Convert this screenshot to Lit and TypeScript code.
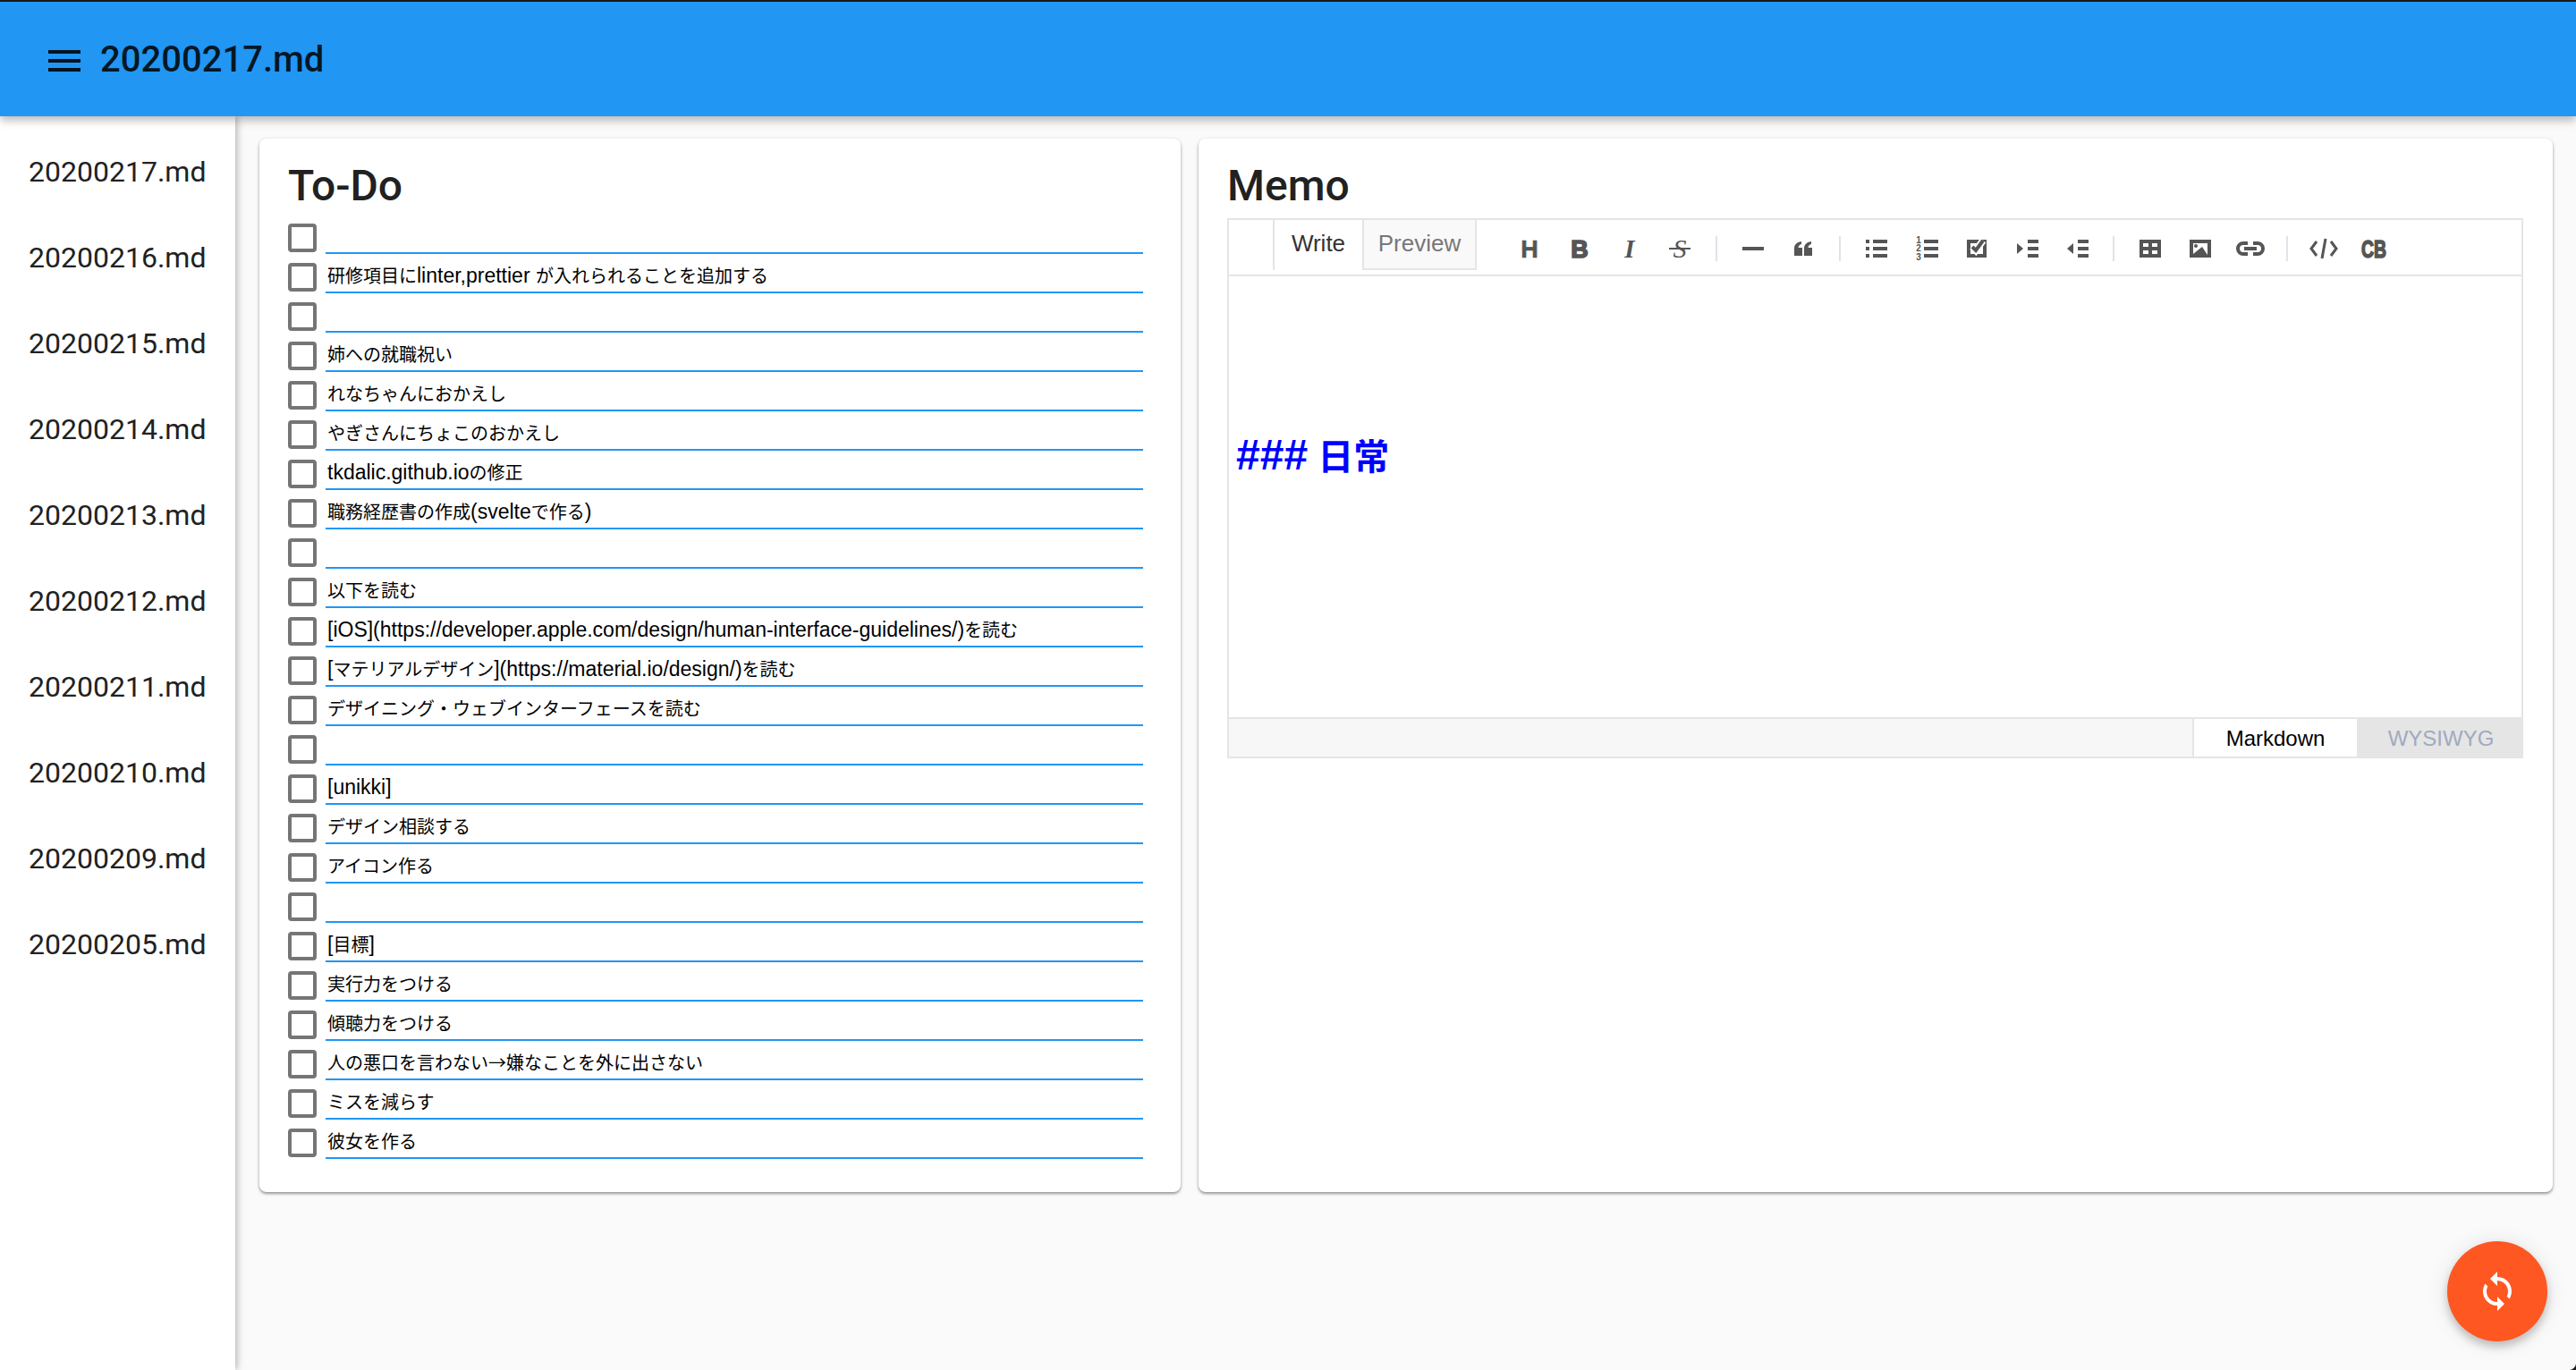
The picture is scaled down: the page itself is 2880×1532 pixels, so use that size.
import { LitElement, css, html, svg } from "lit";
import { customElement } from "lit/decorators.js";

const FILES = [
	"20200217.md", "20200216.md", "20200215.md", "20200214.md", "20200213.md",
	"20200212.md", "20200211.md", "20200210.md", "20200209.md", "20200205.md",
];

const TODOS = [
	"",
	"研修項目にlinter,prettier が入れられることを追加する",
	"",
	"姉への就職祝い",
	"れなちゃんにおかえし",
	"やぎさんにちょこのおかえし",
	"tkdalic.github.ioの修正",
	"職務経歴書の作成(svelteで作る)",
	"",
	"以下を読む",
	"[iOS](https://developer.apple.com/design/human-interface-guidelines/)を読む",
	"[マテリアルデザイン](https://material.io/design/)を読む",
	"デザイニング・ウェブインターフェースを読む",
	"",
	"[unikki]",
	"デザイン相談する",
	"アイコン作る",
	"",
	"[目標]",
	"実行力をつける",
	"傾聴力をつける",
	"人の悪口を言わない→嫌なことを外に出さない",
	"ミスを減らす",
	"彼女を作る",
];

const bars = (x: number, w: number) => svg`
	<rect x=${x} y="6" width=${w} height="4"/>
	<rect x=${x} y="14" width=${w} height="4"/>
	<rect x=${x} y="22" width=${w} height="4"/>`;

const QUOTE = "M6 24v-8c0-4 2-7 8-8v3c-2 .5-3.500 2-3.500 4H15v9z";

// toolbar icons, drawn in a 32x32 box, groups are split by a separator
const ICON_GROUPS = [
	[
		svg`<text x="16" y="26" class="glyph heavy" font-size="27" text-anchor="middle">H</text>`,
		svg`<text x="16" y="26" class="glyph black" font-size="27" text-anchor="middle">B</text>`,
		svg`<text x="16" y="26" class="serif bold" font-size="29" text-anchor="middle">I</text>`,
		svg`<text x="16" y="26" class="serif" font-size="30" text-anchor="middle">S</text><rect x="4" y="15" width="24" height="2"/>`,
	],
	[
		svg`<rect x="4" y="14" width="24" height="4"/>`,
		svg`<path d=${QUOTE}/><path d=${QUOTE} transform="translate(11 0)"/>`,
	],
	[
		svg`<rect x="4" y="6" width="4" height="4"/><rect x="4" y="14" width="4" height="4"/><rect x="4" y="22" width="4" height="4"/>${bars(12, 16)}`,
		svg`<text x="7" y="10" class="digit" font-size="10" text-anchor="middle">1</text><text x="7" y="19" class="digit" font-size="10" text-anchor="middle">2</text><text x="7" y="29" class="digit" font-size="10" text-anchor="middle">3</text>${bars(13, 16)}`,
		svg`<rect x="7" y="8" width="18" height="16" fill="none" stroke="#555" stroke-width="4"/><path d="M11 14l4 4 8-11" fill="none" stroke="#fff" stroke-width="8"/><path d="M11 14l4 4 8-11" fill="none" stroke="#555" stroke-width="4"/>`,
		svg`<path d="M5 10l7 6-7 6z"/>${bars(17, 12)}`,
		svg`<path d="M12 10l-7 6 7 6z"/>${bars(17, 12)}`,
	],
	[
		svg`<path fill-rule="evenodd" d="M4 6h24v20H4zM8 10v4h6v-4zM18 10v4h6v-4zM8 18v4h6v-4zM18 18v4h6v-4z"/>`,
		svg`<rect x="4" y="6" width="24" height="20"/><path d="M8 10h16v13l-6-9-10 8z" fill="#fff"/><circle cx="11" cy="13" r="2"/>`,
		svg`<path d="M13 8H8a8 8 0 0 0 0 16h5v-4H8a4 4 0 0 1 0-8h5zM19 8h5a8 8 0 0 1 0 16h-5v-4h5a4 4 0 0 0 0-8h-5z"/><rect x="9" y="14" width="14" height="4"/>`,
	],
	[
		svg`<path d="M8 8L2 16l6 8M24 8l6 8-6 8M18 5l-4 22" fill="none" stroke="#555" stroke-width="3"/>`,
		svg`<text x="16" y="26" class="glyph black" font-size="27" text-anchor="middle" textLength="28" lengthAdjust="spacingAndGlyphs">CB</text>`,
	],
];

// latin runs are set larger than the kana and kanji around them
const splitRuns = (text: string) =>
	text.split(/([\x20-\x7e]+)/).map((run, i) => (i % 2 ? html`<span class="lat">${run}</span>` : run));

@customElement("app-root")
export class AppRoot extends LitElement {
	static styles = css`
		:host {
			display: block;
			position: relative;
			width: 2880px;
			height: 1532px;
			overflow: hidden;
			background: #fafafa;
			font-family: Roboto, "Noto Sans CJK JP", sans-serif;
			color: #212121;
		}

		.app-bar {
			position: relative;
			z-index: 2;
			box-sizing: border-box;
			height: 130px;
			display: flex;
			align-items: center;
			gap: 22px;
			padding: 4px 0 0 54px;
			background: #2196f3;
			border-top: 2px solid #16181c;
			box-shadow: 0 4px 10px rgba(0, 0, 0, 0.3);
			color: rgba(0, 0, 0, 0.87);
			font-size: 40px;
			font-weight: 500;
		}

		.app-bar span {
			margin-bottom: 4px;
		}

		.burger {
			display: block;
			width: 36px;
			height: 24px;
			flex: none;
		}

		.content {
			display: flex;
			height: 1402px;
		}

		.side {
			position: relative;
			z-index: 1;
			flex: none;
			box-sizing: border-box;
			width: 263px;
			padding: 14px 0 0 32px;
			background: #fff;
			box-shadow: 2px 0 8px rgba(0, 0, 0, 0.28);
			font-size: 32px;
		}

		.side div {
			height: 96px;
			line-height: 96px;
		}

		.main {
			flex: 1;
			display: grid;
			grid-template-columns: 1030fr 1514fr;
			align-items: start;
			gap: 20px;
			padding: 25px 26px 0 27px;
		}

		.card {
			box-sizing: border-box;
			height: 1178px;
			padding: 20px 32px 0;
			background: #fff;
			border-radius: 8px;
			box-shadow: 0 2px 3px rgba(0, 0, 0, 0.35), 0 1px 5px rgba(0, 0, 0, 0.1);
		}

		h2 {
			margin: 0;
			height: 65px;
			font-size: 48px;
			line-height: 66px;
			font-weight: 500;
		}

		.row {
			display: flex;
			gap: 10px;
			padding-right: 10px;
		}

		.check {
			box-sizing: border-box;
			flex: none;
			width: 32px;
			height: 32px;
			margin-top: 10px;
			border: 4px solid #757575;
			border-radius: 4px;
		}

		.field {
			box-sizing: border-box;
			flex: 1;
			height: 44px;
			padding: 7px 0 0 2px;
			border-bottom: 2px solid #2196f3;
			font-family: "Noto Sans CJK JP", sans-serif;
			font-size: 20px;
			line-height: 34px;
			color: #000;
			white-space: nowrap;
		}

		.lat {
			font-family: "Liberation Sans", sans-serif;
			font-size: 23px;
		}

		.editor {
			box-sizing: border-box;
			margin: 4px 1px 0 0;
			height: 604px;
			display: flex;
			flex-direction: column;
			border: 2px solid #e5e5e5;
			font-family: "Liberation Sans", "Noto Sans CJK JP", sans-serif;
		}

		.toolbar {
			flex: none;
			box-sizing: border-box;
			height: 63px;
			display: flex;
			align-items: flex-start;
			padding-left: 49px;
			border-bottom: 2px solid #e5e5e5;
		}

		.tab {
			box-sizing: border-box;
			height: 56px;
			line-height: 52px;
			font-size: 26px;
			text-align: center;
		}

		.tab.write {
			width: 100px;
			border-left: 2px solid #e5e5e5;
			color: #333;
		}

		.tab.preview {
			width: 128px;
			background: #f9f9f9;
			border: 2px solid #e5e5e5;
			border-top: 0;
			color: #777;
		}

		.icons {
			display: flex;
			align-items: center;
			gap: 24px;
			margin: 16px 0 0 43px;
		}

		.icons svg {
			display: block;
			width: 32px;
			height: 32px;
			fill: #555;
			overflow: visible;
		}

		.sep {
			width: 2px;
			height: 28px;
			background: #e1e3e9;
		}

		.glyph {
			font-family: "Liberation Sans", sans-serif;
			font-weight: 700;
		}

		.heavy {
			stroke: #555;
			stroke-width: 0.6;
		}

		.black {
			stroke: #555;
			stroke-width: 1.6;
		}

		.serif {
			font-family: "Liberation Serif", serif;
			font-style: italic;
		}

		.bold {
			font-weight: 700;
		}

		.digit {
			font-family: "Liberation Sans", sans-serif;
			font-weight: 700;
		}

		.body {
			flex: 1;
			padding: 172px 0 0 8px;
			font-size: 40px;
			line-height: 56px;
			font-weight: 700;
			color: #0000ff;
		}

		.hashes {
			font-size: 48px;
		}

		.modes {
			flex: none;
			box-sizing: border-box;
			height: 44px;
			display: flex;
			justify-content: flex-end;
			background: #f7f7f7;
			border-top: 2px solid #e5e5e5;
			font-size: 24px;
		}

		.mode {
			box-sizing: border-box;
			line-height: 44px;
			text-align: center;
		}

		.mode.md {
			width: 184px;
			background: #fff;
			border-left: 2px solid #e5e5e5;
			color: #000;
		}

		.mode.wy {
			width: 184px;
			padding-left: 4px;
			background: #e5e5e5;
			color: #a0aabf;
		}

		.fab {
			position: absolute;
			right: 32px;
			bottom: 32px;
			width: 112px;
			height: 112px;
			display: flex;
			align-items: center;
			justify-content: center;
			border-radius: 50%;
			background: #ff5722;
			box-shadow: 0 6px 10px rgba(0, 0, 0, 0.2), 0 2px 24px rgba(0, 0, 0, 0.1);
		}

		.fab svg {
			width: 48px;
			height: 48px;
			fill: #fff;
		}

		.corner {
			position: absolute;
			right: 0;
			bottom: 0;
			width: 8px;
			height: 8px;
			background: radial-gradient(circle at top left, transparent 7.500px, #1c1a1e 8.500px);
		}
	`;

	renderIcons() {
		return ICON_GROUPS.map((group, i) => html`
			${i > 0 ? html`<span class="sep"></span>` : ""}
			${group.map((icon) => html`<svg viewBox="0 0 32 32">${icon}</svg>`)}
		`);
	}

	render() {
		return html`
			<header class="app-bar">
				<svg class="burger" viewBox="0 0 36 24" fill="currentColor">
					<rect width="36" height="4"/>
					<rect y="10" width="36" height="4"/>
					<rect y="20" width="36" height="4"/>
				</svg>
				<span>20200217.md</span>
			</header>
			<div class="content">
				<nav class="side">
					${FILES.map((name) => html`<div>${name}</div>`)}
				</nav>
				<main class="main">
					<section class="card">
						<h2>To-Do</h2>
						${TODOS.map((todo) => html`
							<div class="row">
								<span class="check"></span>
								<div class="field">${splitRuns(todo)}</div>
							</div>
						`)}
					</section>
					<section class="card">
						<h2>Memo</h2>
						<div class="editor">
							<div class="toolbar">
								<div class="tab write">Write</div>
								<div class="tab preview">Preview</div>
								<div class="icons">${this.renderIcons()}</div>
							</div>
							<div class="body"><span class="hashes">###</span> 日常</div>
							<div class="modes">
								<div class="mode md">Markdown</div>
								<div class="mode wy">WYSIWYG</div>
							</div>
						</div>
					</section>
				</main>
			</div>
			<div class="fab">
				<svg viewBox="0 0 24 24">
					<path d="M12 4V1L8 5l4 4V6c3.31 0 6 2.69 6 6 0 1.01-.25 1.97-.7 2.8l1.46 1.46C19.54 15.03 20 13.57 20 12c0-4.42-3.58-8-8-8zm0 14c-3.31 0-6-2.69-6-6 0-1.01.25-1.97.7-2.8L5.24 7.74C4.46 8.97 4 10.43 4 12c0 4.42 3.58 8 8 8v3l4-4-4-4v3z"/>
				</svg>
			</div>
			<div class="corner"></div>
		`;
	}
}
